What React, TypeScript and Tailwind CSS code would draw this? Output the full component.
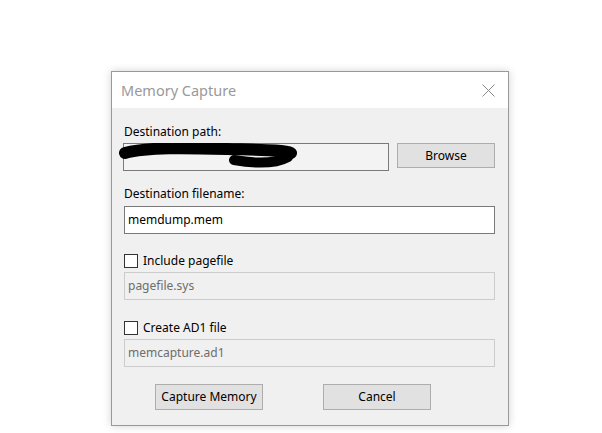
import type { ReactNode } from 'react'

const font = { fontFamily: '"Noto Sans", "Open Sans", Arial, sans-serif' }

function Label({ children }: { children: ReactNode }) {
  return <div className="h-4 text-[12px] leading-4 text-black">{children}</div>
}

function CheckRow({ label }: { label: string }) {
  return (
    <label className="flex h-4 items-center gap-[5px] text-[12px] leading-4 text-black">
      <span className="block h-[14px] w-[14px] border border-[#333333] bg-white" />
      {label}
    </label>
  )
}

function DisabledInput({ value }: { value: string }) {
  return (
    <div className="flex h-[28px] w-[371px] items-center border border-[#cccccc] bg-[#f0f0f0] px-[3px] text-[12px] text-[#6d6d6d]">
      {value}
    </div>
  )
}

function DialogButton({ children }: { children: ReactNode }) {
  return (
    <button
      type="button"
      className="flex h-[26px] w-[108px] items-center justify-center border border-[#adadad] bg-[#e1e1e1] text-[12px] text-black"
    >
      {children}
    </button>
  )
}

export default function App() {
  return (
    <div className="h-[433px] w-[602px] bg-white pl-[111px] pt-[71px]" style={font}>
      <div className="flex h-[355px] w-[398px] flex-col border border-[#999999] bg-[#f0f0f0] shadow-[0_0_8px_rgba(0,0,0,0.18)]">
        <div className="flex h-[36px] items-center justify-between bg-white pl-[9px] pr-[13px] pt-[1px]">
          <span className="text-[14.5px] text-[#999999]">Memory Capture</span>
          <svg width="13" height="13" viewBox="0 0 13 13" className="text-[#888888]">
            <path d="M0.5 0.5 L12.5 12.5 M12.5 0.5 L0.5 12.5" stroke="currentColor" strokeWidth="1" fill="none" />
          </svg>
        </div>

        <div className="flex flex-col px-3 pt-[16px]">
          <Label>Destination path:</Label>
          <div className="mt-[3px] flex items-start gap-[8px]">
            <div className="relative ml-[-1px] h-[28px] w-[266px] border border-[#7a7a7a] bg-[#f3f3f3]">
              <svg
                className="absolute left-[-7px] top-[-1px]"
                width="190"
                height="28"
                viewBox="0 0 190 28"
              >
                <path
                  d="M8 10 C 30 4, 70 5, 110 6 S 168 7, 174 10"
                  stroke="#000"
                  strokeWidth="12"
                  strokeLinecap="round"
                  fill="none"
                />
                <path
                  d="M117 17 C 140 21, 160 20, 171 14"
                  stroke="#000"
                  strokeWidth="10"
                  strokeLinecap="round"
                  fill="none"
                />
              </svg>
            </div>
            <div className="h-[25px]">
              <div className="flex h-[25px] w-[98px] items-center justify-center border border-[#adadad] bg-[#e1e1e1] text-[12px] text-black">
                Browse
              </div>
            </div>
          </div>

          <div className="mt-[15px]">
            <Label>Destination filename:</Label>
          </div>
          <div className="mt-[4px] flex h-[28px] w-[371px] items-center border border-[#7a7a7a] bg-white px-[3px] text-[12px] text-black">
            memdump.mem
          </div>

          <div className="mt-[19px]">
            <CheckRow label="Include pagefile" />
          </div>
          <div className="mt-[3px]">
            <DisabledInput value="pagefile.sys" />
          </div>

          <div className="mt-[20px]">
            <CheckRow label="Create AD1 file" />
          </div>
          <div className="mt-[3px]">
            <DisabledInput value="memcapture.ad1" />
          </div>

          <div className="mt-[17px] flex gap-[60px] pl-[31px]">
            <DialogButton>Capture Memory</DialogButton>
            <DialogButton>Cancel</DialogButton>
          </div>
        </div>
      </div>
    </div>
  )
}
